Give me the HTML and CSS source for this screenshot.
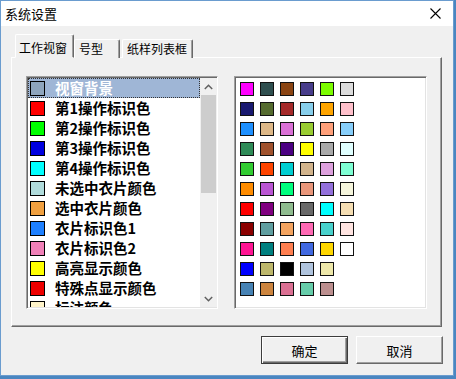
FILE: index.html
```html
<!DOCTYPE html>
<html lang="zh">
<head>
<meta charset="utf-8">
<title>系统设置</title>
<link rel="stylesheet" href="styles.css">
</head>
<body>
<div class="window">
  <div class="titlebar">
    <span class="title">系统设置</span>
    <svg class="close" width="11" height="11" viewBox="0 0 11 11"><path d="M0.5 0.5 L10.5 10.5 M10.5 0.5 L0.5 10.5" stroke="#000" stroke-width="1.1" fill="none"/></svg>
  </div>
  <div class="body">
    <div class="tabs">
      <div class="tab tab-active">工作视窗</div>
      <div class="tab tab-2">号型</div>
      <div class="tab tab-3">纸样列表框</div>
    </div>
    <div class="panel">
      <div class="listbox">
        <div class="items">
          <div class="row selected"><span class="sw" style="background:#8ea5bd"></span><span class="label">视窗背景</span></div>
          <div class="row"><span class="sw" style="background:#ff0000"></span><span class="label">第1操作标识色</span></div>
          <div class="row"><span class="sw" style="background:#00ff00"></span><span class="label">第2操作标识色</span></div>
          <div class="row"><span class="sw" style="background:#0000e0"></span><span class="label">第3操作标识色</span></div>
          <div class="row"><span class="sw" style="background:#00ffff"></span><span class="label">第4操作标识色</span></div>
          <div class="row"><span class="sw" style="background:#b0dcdc"></span><span class="label">未选中衣片颜色</span></div>
          <div class="row"><span class="sw" style="background:#f0a040"></span><span class="label">选中衣片颜色</span></div>
          <div class="row"><span class="sw" style="background:#1e80ff"></span><span class="label">衣片标识色1</span></div>
          <div class="row"><span class="sw" style="background:#f080b8"></span><span class="label">衣片标识色2</span></div>
          <div class="row"><span class="sw" style="background:#ffff00"></span><span class="label">高亮显示颜色</span></div>
          <div class="row"><span class="sw" style="background:#ee0000"></span><span class="label">特殊点显示颜色</span></div>
          <div class="row"><span class="sw" style="background:#fff3c8"></span><span class="label">标注颜色</span></div>
        </div>
        <div class="scrollbar">
          <div class="arrow"><svg width="9" height="6" viewBox="0 0 9 6"><path d="M0.8 5 L4.5 1.3 L8.2 5" stroke="#606060" stroke-width="1.5" fill="none"/></svg></div>
          <div class="track"><div class="thumb"></div></div>
          <div class="arrow"><svg width="9" height="6" viewBox="0 0 9 6"><path d="M0.8 1 L4.5 4.7 L8.2 1" stroke="#606060" stroke-width="1.5" fill="none"/></svg></div>
        </div>
      </div>
      <div class="palette">
        <div class="grid">
          <span class="c" style="background:#ff00ff"></span><span class="c" style="background:#2f4f4f"></span><span class="c" style="background:#8b4513"></span><span class="c" style="background:#483d8b"></span><span class="c" style="background:#7cfc00"></span><span class="c" style="background:#dcdcdc"></span>
          <span class="c" style="background:#191970"></span><span class="c" style="background:#556b2f"></span><span class="c" style="background:#a52a2a"></span><span class="c" style="background:#87ceeb"></span><span class="c" style="background:#ffa500"></span><span class="c" style="background:#ffc0cb"></span>
          <span class="c" style="background:#1e90ff"></span><span class="c" style="background:#deb887"></span><span class="c" style="background:#da70d6"></span><span class="c" style="background:#9acd32"></span><span class="c" style="background:#ffa07a"></span><span class="c" style="background:#87cefa"></span>
          <span class="c" style="background:#2e8b57"></span><span class="c" style="background:#a0522d"></span><span class="c" style="background:#4b0082"></span><span class="c" style="background:#ffff00"></span><span class="c" style="background:#a9a9a9"></span><span class="c" style="background:#e0ffff"></span>
          <span class="c" style="background:#32cd32"></span><span class="c" style="background:#ff4500"></span><span class="c" style="background:#00ced1"></span><span class="c" style="background:#d2b48c"></span><span class="c" style="background:#dda0dd"></span><span class="c" style="background:#7fffd4"></span>
          <span class="c" style="background:#ff8c00"></span><span class="c" style="background:#ba55d3"></span><span class="c" style="background:#00ff7f"></span><span class="c" style="background:#e9967a"></span><span class="c" style="background:#9370db"></span><span class="c" style="background:#f5f5dc"></span>
          <span class="c" style="background:#ff0000"></span><span class="c" style="background:#800080"></span><span class="c" style="background:#8fbc8f"></span><span class="c" style="background:#696969"></span><span class="c" style="background:#00ffff"></span><span class="c" style="background:#f5deb3"></span>
          <span class="c" style="background:#8b0000"></span><span class="c" style="background:#5f9ea0"></span><span class="c" style="background:#f4a460"></span><span class="c" style="background:#ff69b4"></span><span class="c" style="background:#48d1cc"></span><span class="c" style="background:#ffe4e1"></span>
          <span class="c" style="background:#ff1493"></span><span class="c" style="background:#008080"></span><span class="c" style="background:#ff7f50"></span><span class="c" style="background:#4169e1"></span><span class="c" style="background:#ffd700"></span><span class="c" style="background:#ffffff"></span>
          <span class="c" style="background:#0000ff"></span><span class="c" style="background:#bdb76b"></span><span class="c" style="background:#000000"></span><span class="c" style="background:#b0c4de"></span><span class="c" style="background:#eee8aa"></span><span class="empty"></span>
          <span class="c" style="background:#4682b4"></span><span class="c" style="background:#cd853f"></span><span class="c" style="background:#db7093"></span><span class="c" style="background:#66cdaa"></span><span class="c" style="background:#bc8f8f"></span><span class="empty"></span>
        </div>
      </div>
    </div>
    <div class="footer">
      <button class="btn btn-default">确定</button>
      <button class="btn">取消</button>
    </div>
  </div>
</div>
</body>
</html>
```

FILE: styles.css
```css
html, body {
  margin: 0;
  padding: 0;
}
body {
  width: 456px;
  height: 379px;
  background: #4a86c0;
  font-family: "Noto Sans CJK SC", "Noto Sans", sans-serif;
  color: #000;
  overflow: hidden;
}
.window {
  width: 454px;
  height: 376px;
  box-sizing: border-box;
  border: 1px solid #6a9ccf;
  display: flex;
  flex-direction: column;
  background: #f0f0f0;
}
.titlebar {
  height: 25px;
  flex: none;
  background: #fff;
  display: flex;
  align-items: center;
  justify-content: space-between;
  padding: 0 12px 0 4px;
  font-size: 13px;
  line-height: 1;
}
.body {
  flex: 1;
  display: flex;
  flex-direction: column;
  padding: 8px 11px 0 10px;
}
.tabs {
  display: flex;
  align-items: flex-end;
  height: 24px;
  padding-left: 4px;
  position: relative;
  z-index: 1;
  margin-bottom: -1px;
}
.tab {
  box-sizing: border-box;
  font-size: 12px;
  line-height: 1;
  height: 19px;
  padding-top: 3px;
  background: #f0f0f0;
  border-top: 1px solid #fff;
  border-left: 1px solid #fff;
  border-right: 1px solid #696969;
  box-shadow: inset -1px 0 #a0a0a0;
  border-radius: 2px 2px 0 0;
}
.tab-active {
  width: 59px;
  height: 24px;
  padding: 7px 0 0 3px;
  border-bottom: 1px solid #f0f0f0;
}
.tab-2 {
  width: 46px;
  padding-left: 4px;
}
.tab-3 {
  width: 71px;
  margin-left: 2px;
  padding-left: 4px;
}
.panel {
  height: 270px;
  box-sizing: border-box;
  border-top: 1px solid #fff;
  border-left: 1px solid #fff;
  border-right: 1px solid #696969;
  border-bottom: 1px solid #696969;
  box-shadow: inset -1px -1px #a0a0a0;
  display: flex;
  align-items: flex-start;
  gap: 16px;
  padding: 18px 0 0 14px;
}
.listbox, .palette {
  box-sizing: border-box;
  height: 233px;
  background: #fff;
  border: 1px solid;
  border-color: #a0a0a0 #fff #fff #a0a0a0;
  box-shadow: inset 1px 1px #696969, inset -1px -1px #e3e3e3;
}
.listbox {
  width: 192px;
  display: flex;
  padding: 1px 0 1px 1px;
}
.items {
  flex: 1;
  overflow: hidden;
}
.row {
  height: 20px;
  display: flex;
  align-items: center;
  padding-left: 2px;
  box-sizing: border-box;
}
.row.selected {
  background: #9fb6d6;
  outline: 1px dotted #333;
  outline-offset: -1px;
}
.row.selected .label {
  color: #fff;
}
.sw {
  width: 15px;
  height: 15px;
  box-sizing: border-box;
  border: 1px solid #000;
  margin-right: 10px;
  flex: none;
}
.label {
  font-size: 14.5px;
  font-weight: 700;
  line-height: 18px;
  white-space: nowrap;
}
.scrollbar {
  width: 17px;
  flex: none;
  display: flex;
  flex-direction: column;
  background: #f0f0f0;
}
.arrow {
  height: 17px;
  display: flex;
  align-items: center;
  justify-content: center;
  flex: none;
}
.track {
  flex: 1;
}
.thumb {
  margin: 0 1px;
  height: 98px;
  background: #cdcdcd;
}
.palette {
  width: 193px;
  padding: 5px 0 0 5px;
}
.grid {
  display: grid;
  grid-template-columns: repeat(6, 14px);
  grid-auto-rows: 14px;
  column-gap: 6px;
  row-gap: 6px;
}
.c {
  box-sizing: border-box;
  border: 1px solid #111;
}
.footer {
  display: flex;
  justify-content: flex-end;
  gap: 8px;
  margin-top: 9px;
  margin-right: -1px;
}
.btn {
  width: 87px;
  height: 28px;
  box-sizing: border-box;
  font-family: "Noto Sans CJK SC", sans-serif;
  font-size: 13px;
  color: #000;
  background: #f0f0f0;
  border: 1px solid;
  border-color: #fff #696969 #696969 #fff;
  box-shadow: inset -1px -1px #a0a0a0;
  padding: 0;
}
.btn-default {
  border: 1px solid #3c3c3c;
  box-shadow: inset 1px 1px #fff, inset -1px -1px #696969, inset -2px -2px #a0a0a0;
}
```
